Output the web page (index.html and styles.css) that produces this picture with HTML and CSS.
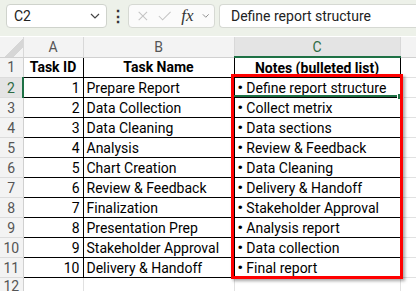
FILE: index.html
```html
<!DOCTYPE html>
<html>
<head>
  <meta charset="UTF-8" />
  <title>Task Notes</title>
  <link rel="stylesheet" href="styles.css">
</head>
<body>
  <div class="toolbar">
    <div class="namebox">
      <span>C2</span>
      <svg class="chev" width="10" height="6" viewBox="0 0 10 6"><path d="M1 1l4 4 4-4" fill="none" stroke="#444" stroke-width="1.2"/></svg>
    </div>
    <div class="dots">⋮</div>
    <div class="fxbox">
      <svg width="14" height="14" viewBox="0 0 14 14"><path d="M2 2l10 10M12 2L2 12" stroke="#c4c4c4" stroke-width="1.2"/></svg>
      <svg width="16" height="14" viewBox="0 0 16 14"><path d="M1 7l4.5 4.5L15 2" fill="none" stroke="#c4c4c4" stroke-width="1.2"/></svg>
      <span class="fx">fx</span>
      <svg width="9" height="6" viewBox="0 0 9 6"><path d="M1 1l3.5 3.5L8 1" fill="none" stroke="#888" stroke-width="1.1"/></svg>
    </div>
    <div class="formula">Define report structure</div>
  </div>

  <div class="sheet">
    <table class="grid">
      <colgroup>
        <col class="w-rh"><col class="w-a"><col class="w-b"><col class="w-c"><col class="w-d">
      </colgroup>
      <thead>
        <tr>
          <th class="corner"></th>
          <th>A</th>
          <th>B</th>
          <th class="sel">C</th>
          <th></th>
        </tr>
      </thead>
      <tbody id="rows"></tbody>
    </table>
    <div class="active"></div>
    <div class="handle"></div>
    <div class="highlight"></div>
  </div>

  <script>
    var tasks = [
      [1, "Prepare Report", "Define report structure"],
      [2, "Data Collection", "Collect metrix"],
      [3, "Data Cleaning", "Data sections"],
      [4, "Analysis", "Review & Feedback"],
      [5, "Chart Creation", "Data Cleaning"],
      [6, "Review & Feedback", "Delivery & Handoff"],
      [7, "Finalization", "Stakeholder Approval"],
      [8, "Presentation Prep", "Analysis report"],
      [9, "Stakeholder Approval", "Data collection"],
      [10, "Delivery & Handoff", "Final report"]
    ];

    function esc(s) {
      return s.replace(/&/g, "&amp;");
    }

    var html = '<tr><td class="rh">1</td>' +
      '<td class="cell head">Task ID</td>' +
      '<td class="cell head">Task Name</td>' +
      '<td class="cell head">Notes (bulleted list)</td>' +
      '<td></td></tr>';

    for (var i = 0; i < tasks.length; i++) {
      var t = tasks[i];
      var n = i + 2;
      html += '<tr>' +
        '<td class="rh' + (n === 2 ? ' sel' : '') + '">' + n + '</td>' +
        '<td class="cell num">' + t[0] + '</td>' +
        '<td class="cell">' + esc(t[1]) + '</td>' +
        '<td class="cell"><span class="bullet">•</span> ' + esc(t[2]) + '</td>' +
        '<td></td></tr>';
    }
    html += '<tr><td class="rh last">12</td><td></td><td></td><td></td><td></td></tr>';

    document.getElementById("rows").innerHTML = html;
  </script>
</body>
</html>
```

FILE: styles.css
```css
html, body {
  margin: 0;
  padding: 0;
  overflow: hidden;
  background: #fff;
}

body {
  font-family: Roboto, "Liberation Sans", sans-serif;
  color: #000;
}

/* formula bar */
.toolbar {
  display: flex;
  align-items: center;
  height: 36px;
  padding: 0 0 4px 6px;
  box-sizing: border-box;
  background: #edf1e9;
}

.namebox {
  display: flex;
  align-items: center;
  justify-content: space-between;
  width: 101px;
  height: 24px;
  box-sizing: border-box;
  padding: 0 6px 0 7px;
  background: #fff;
  border: 1px solid #cfd3cc;
  border-radius: 4px;
  font-size: 14px;
  color: #222;
}

.dots {
  width: 21px;
  text-align: center;
  font-size: 16px;
  font-weight: bold;
  color: #333;
}

.fxbox {
  display: flex;
  align-items: center;
  gap: 9px;
  width: 87px;
  height: 24px;
  box-sizing: border-box;
  padding: 0 4px 0 8px;
  background: #fbfbfb;
  border: 1px solid #d6d9d3;
  border-radius: 4px;
}

.fx {
  font-family: "Liberation Serif", serif;
  font-style: italic;
  font-size: 17px;
  color: #333;
  margin-left: 1px;
}

.formula {
  flex: 1;
  margin-left: 4px;
  height: 24px;
  line-height: 22px;
  box-sizing: border-box;
  padding-left: 11px;
  background: #fff;
  border: 1px solid #d6d9d3;
  border-right: none;
  border-radius: 4px 0 0 4px;
  font-size: 14px;
  color: #222;
}

/* sheet grid */
.sheet {
  position: relative;
  padding-top: 1px;
}

.grid {
  table-layout: fixed;
  width: 460px;
  border-collapse: collapse;
  font-size: 14px;
}

.w-rh { width: 23px; }
.w-a { width: 60px; }
.w-b { width: 151px; }
.w-c { width: 166px; }
.w-d { width: 60px; }

.grid th,
.grid td {
  height: 19px;
  padding: 0;
  border-right: 1px solid #e1e1e1;
  border-bottom: 1px solid #e1e1e1;
  white-space: nowrap;
  overflow: hidden;
}

.grid th {
  background: #f3f3f3;
  font-weight: normal;
  color: #555;
  border-right-color: #d8d8d8;
  border-bottom-color: #d0d0d0;
}

.grid th.sel {
  background: #e4e4e4;
  color: #2e6b45;
  border-bottom: 2px solid #1e7145;
}

.grid th.corner {
  background: #f3f3f3 linear-gradient(135deg, transparent 58%, #d6d6d6 58%, #d6d6d6 78%, transparent 78%);
}

.grid td.rh {
  background: #f3f3f3;
  color: #555;
  text-align: center;
  border-right-color: #d0d0d0;
  border-bottom-color: #dcdcdc;
}

.grid td.rh.last {
  vertical-align: top;
  line-height: 16px;
}

.grid td.rh.sel {
  background: #e4e4e4;
  color: #2e6b45;
  border-right: 2px solid #1e7145;
}

.grid td.cell {
  padding: 0 3px;
  border-right-color: #000;
  border-bottom-color: #000;
}

.grid td.head {
  font-weight: bold;
  text-align: center;
}

.grid td.num {
  text-align: right;
}

.bullet {
  font-weight: bold;
  font-size: 15px;
}

/* active cell C2 */
.active {
  position: absolute;
  left: 234px;
  top: 59px;
  width: 166px;
  height: 2px;
  background: #1e7145;
}

.handle {
  position: absolute;
  left: 397px;
  top: 57px;
  width: 5px;
  height: 5px;
  background: #1e7145;
  border: 1px solid #fff;
}

/* red outline over the notes column */
.highlight {
  position: absolute;
  left: 231px;
  top: 38px;
  width: 166px;
  height: 199px;
  border: 3px solid #f00;
  box-shadow: 2px 2px 3px rgba(0, 0, 0, 0.35);
}
```
